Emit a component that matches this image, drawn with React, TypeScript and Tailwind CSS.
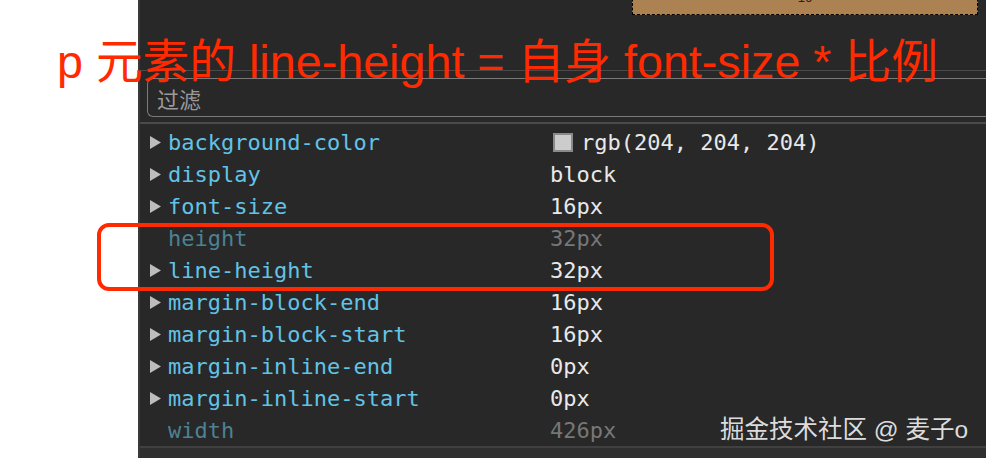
import React from 'react';

type Row = {
  name: string;
  value: string;
  expandable: boolean;
  swatch?: boolean;
};

const rows: Row[] = [
  { name: 'background-color', value: 'rgb(204, 204, 204)', expandable: true, swatch: true },
  { name: 'display', value: 'block', expandable: true },
  { name: 'font-size', value: '16px', expandable: true },
  { name: 'height', value: '32px', expandable: false },
  { name: 'line-height', value: '32px', expandable: true },
  { name: 'margin-block-end', value: '16px', expandable: true },
  { name: 'margin-block-start', value: '16px', expandable: true },
  { name: 'margin-inline-end', value: '0px', expandable: true },
  { name: 'margin-inline-start', value: '0px', expandable: true },
  { name: 'width', value: '426px', expandable: false },
];

function Triangle() {
  return (
    <svg width="11" height="13" viewBox="0 0 11 13" className="shrink-0">
      <path d="M0 0 L11 6.5 L0 13 Z" fill="#bdbdbd" />
    </svg>
  );
}

export default function App() {
  return (
    <div className="relative w-[986px] h-[458px] overflow-hidden bg-white flex">
      {/* Left blank area */}
      <div className="w-[138px] shrink-0 bg-white" />

      {/* DevTools computed panel */}
      <div className="flex-1 flex flex-col bg-[#282828] border-l-2 border-[#393939]">
        {/* box model preview top */}
        <div className="h-[70px] shrink-0 relative">
          <div className="absolute left-[492px] top-[-6px] w-[346px] h-[21px] bg-[#ad8253] border border-dashed border-black flex items-start justify-center">
            <span className="text-[13px] leading-none text-[#222] mt-[-4px] font-['Liberation_Sans',sans-serif]">16</span>
          </div>
        </div>
        <div className="h-[8px] shrink-0 border-t border-[#4a4a4a]" />

        {/* filter */}
        <div className="h-[39px] shrink-0 ml-[7px] border border-r-0 border-[#7a7a7a] rounded-l-[6px] flex items-center pl-[9px]">
          <span className="text-[22px] leading-none text-[#9a9a9a] font-['Noto_Sans_CJK_SC',sans-serif]">过滤</span>
        </div>
        <div className="h-[7px] shrink-0 border-b-2 border-[#4a4a4a]" />

        {/* properties */}
        <div className="flex-1 flex flex-col pt-[2px] font-['DejaVu_Sans_Mono',monospace] text-[22px]">
          {rows.map((r) => (
            <div key={r.name} className="h-[32px] flex items-center shrink-0">
              <div className="w-[28px] pl-[10px] flex items-center">
                {r.expandable && <Triangle />}
              </div>
              <div
                className={`w-[382px] whitespace-nowrap ${
                  r.expandable ? 'text-[#62c3e6]' : 'text-[#4c8293]'
                }`}
              >
                {r.name}
              </div>
              <div
                className={`flex items-center gap-[8px] whitespace-nowrap ${
                  r.expandable ? 'text-[#e8e8e8]' : 'text-[#777777]'
                }`}
              >
                {r.swatch && (
                  <span className="inline-block w-[20px] h-[19px] bg-[#cccccc] border-2 border-[#8a8a8a] ml-[3px]" />
                )}
                {r.value}
              </div>
            </div>
          ))}
        </div>
        <div className="h-[12px] shrink-0 bg-[#2f2f2f] border-t-2 border-[#404040]" />
      </div>

      {/* red annotation */}
      <div className="absolute left-[57px] top-[39px] text-[46.7px] leading-none text-[#ff2a00] whitespace-nowrap font-['Liberation_Sans','Noto_Sans_CJK_SC',sans-serif]">
        p 元素的 line-height = 自身 font-size * 比例
      </div>
      <div className="absolute left-[97px] top-[223px] w-[677px] h-[68px] border-[4px] border-[#ff2a00] rounded-[12px]" />

      {/* watermark */}
      <div className="absolute left-[720px] top-[413px] text-[24.5px] leading-[34px] text-[#dcdcdc] whitespace-nowrap font-['Liberation_Sans','Noto_Sans_CJK_SC',sans-serif]">
        掘金技术社区 @ 麦子o
      </div>
    </div>
  );
}
